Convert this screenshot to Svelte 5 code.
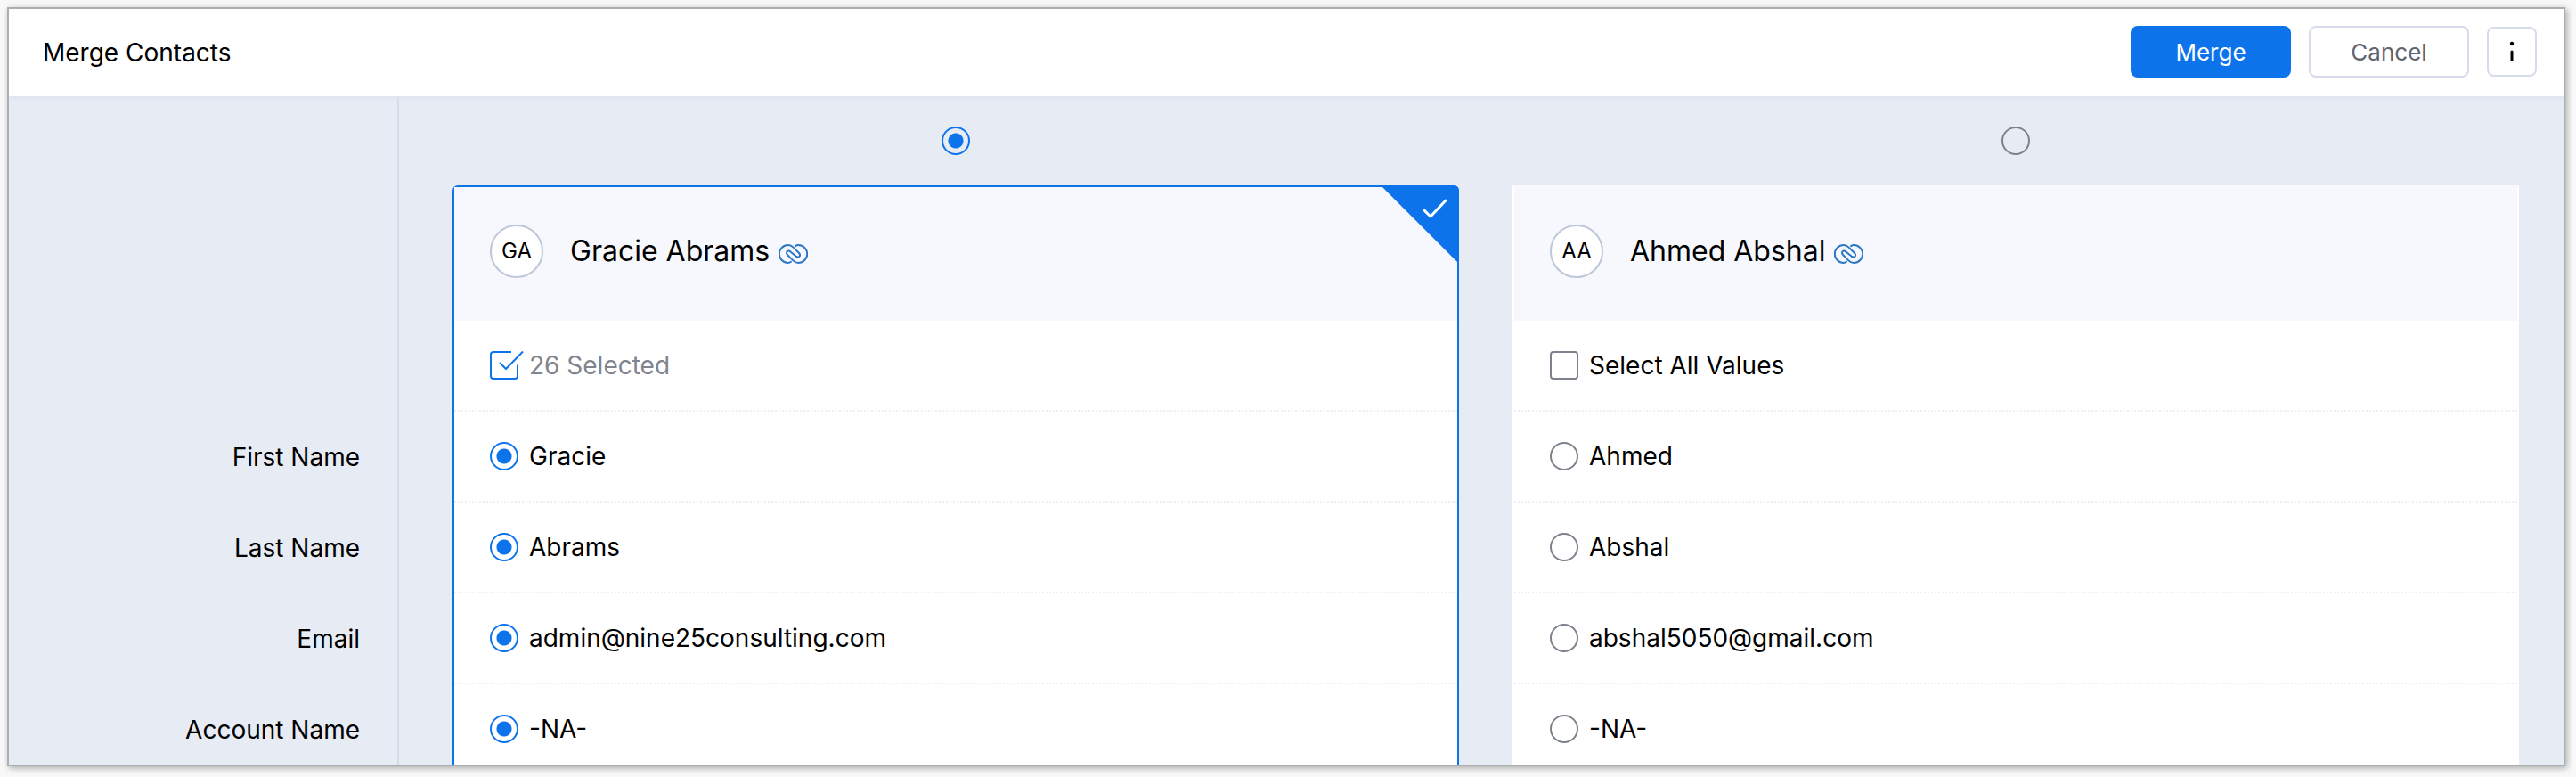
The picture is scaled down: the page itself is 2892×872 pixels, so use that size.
<script lang="ts">
    interface Contact {
        id: string;
        initials: string;
        name: string;
        values: string[];
    }

    const fields: string[] = [
        "First Name",
        "Last Name",
        "Email",
        "Account Name",
    ];

    const contacts: Contact[] = [
        {
            id: "gracie",
            initials: "GA",
            name: "Gracie Abrams",
            values: ["Gracie", "Abrams", "admin@nine25consulting.com", "-NA-"],
        },
        {
            id: "ahmed",
            initials: "AA",
            name: "Ahmed Abshal",
            values: ["Ahmed", "Abshal", "abshal5050@gmail.com", "-NA-"],
        },
    ];

    const totalFields = 26;

    let master: string = "gracie";
    let picked: string[] = fields.map(() => "gracie");

    $: allFrom = (id: string) => picked.every((p) => p === id);

    function selectAll(id: string) {
        picked = fields.map(() => id);
    }
</script>

<div class="dialog">
    <header class="topbar">
        <h1>Merge Contacts</h1>
        <div class="actions">
            <button type="button" class="primary">Merge</button>
            <button type="button">Cancel</button>
            <button type="button" class="info" aria-label="Information">
                <svg viewBox="0 0 8 24" width="8" height="24">
                    <circle cx="4" cy="3" r="2.2" />
                    <path d="M4 12V21.5" />
                </svg>
            </button>
        </div>
    </header>

    <div class="content">
        <div class="labels">
            {#each fields as field}
                <div class="field-label">{field}</div>
            {/each}
        </div>

        <div class="records">
            {#each contacts as contact}
                <div class="record">
                    <div class="master">
                        <input
                            type="radio"
                            name="master"
                            value={contact.id}
                            aria-label={contact.name}
                            bind:group={master}
                        />
                    </div>

                    <section class="card" class:active={master === contact.id}>
                        <div class="card-head">
                            <span class="avatar">{contact.initials}</span>
                            <h2>{contact.name}</h2>
                            <a href="#{contact.id}" aria-label="Open contact">
                                <svg viewBox="0 0 33 22" width="33" height="22">
                                    <path
                                        d="M14 19.8C13 20.6 12 21 10.8 21A10 10 0 0 1 10.8 1C13 1 15 2 16.6 3.6L23 10C25.6 13 22.6 16 19.6 13.6L13.4 8.4C10.4 6 7.6 9 10 12L16.4 18.4C18 20 20 21 22.2 21A10 10 0 0 0 22.2 1C21 1 20 1.4 19 2.2"
                                    />
                                </svg>
                            </a>
                            {#if master === contact.id}
                                <svg class="corner" viewBox="0 0 88 88">
                                    <path class="fill" d="M0 0H88V88Z" />
                                    <path
                                        class="tick"
                                        d="M49 28L56 35L73 17"
                                    />
                                </svg>
                            {/if}
                        </div>

                        <label class="row">
                            <span class="box">
                                <input
                                    type="checkbox"
                                    checked={allFrom(contact.id)}
                                    on:change={() => selectAll(contact.id)}
                                />
                                {#if allFrom(contact.id)}
                                    <svg viewBox="0 0 38 32">
                                        <path
                                            d="M24 1H4Q1 1 1 4V28Q1 31 4 31H28Q31 31 31 28V15.5M11 13L18 20L37 0.5"
                                        />
                                    </svg>
                                {/if}
                            </span>
                            {#if allFrom(contact.id)}
                                <span class="muted">{totalFields} Selected</span>
                            {:else}
                                <span>Select All Values</span>
                            {/if}
                        </label>

                        {#each contact.values as value, i}
                            <label class="row">
                                <input
                                    type="radio"
                                    name="field-{i}"
                                    value={contact.id}
                                    bind:group={picked[i]}
                                />
                                <span>{value}</span>
                            </label>
                        {/each}
                    </section>
                </div>
            {/each}
        </div>
    </div>
</div>

<style>
    :global(body) {
        background: #f8f8f8;
    }

    .dialog {
        display: flex;
        flex-direction: column;
        box-sizing: border-box;
        height: calc(100vh - 20px);
        margin: 8px 12px 12px 8px;
        border: 2px solid #a9afb2;
        box-shadow: 2px 2px 7px rgba(0, 0, 0, 0.32);
        background: #e6ebf4;
        color: #000;
        font-family: Inter, "Liberation Sans", sans-serif;
        font-size: 28px;
        line-height: 36px;
        overflow: hidden;
    }

    h1,
    h2 {
        margin: 0;
        font-weight: 400;
    }

    .topbar {
        display: flex;
        flex-shrink: 0;
        align-items: center;
        justify-content: space-between;
        height: 98px;
        padding: 0 30px 0 38px;
        background: #fff;
        box-shadow: 0 2px 4px #dde3eb;
        z-index: 1;
    }

    .topbar h1 {
        font-size: 28px;
    }

    .actions {
        display: flex;
        align-items: center;
        gap: 20px;
        padding-bottom: 2px;
    }

    button {
        box-sizing: border-box;
        width: 180px;
        height: 58px;
        padding: 0;
        border: 2px solid #d5dbe8;
        border-radius: 8px;
        background: #fff;
        color: #616570;
        font-family: inherit;
        font-size: 26px;
        cursor: pointer;
    }

    button.primary {
        border-color: #0c73eb;
        background: #0c73eb;
        color: #fff;
    }

    button.info {
        display: flex;
        align-items: center;
        justify-content: center;
        width: 56px;
        height: 56px;
    }

    .info path {
        stroke: #000;
        stroke-width: 3;
        stroke-linecap: round;
    }

    .content {
        display: flex;
        flex: 1;
        min-height: 0;
        overflow: hidden;
    }

    .labels {
        box-sizing: border-box;
        flex: 0 0 438px;
        padding: 354px 42px 0 0;
        border-right: 2px solid #d5dbe7;
        text-align: right;
    }

    .field-label {
        height: 102px;
        line-height: 102px;
    }

    .records {
        display: flex;
        flex: 1;
        gap: 60px;
        padding: 0 50px 0 60px;
    }

    .record {
        flex: 1;
        min-width: 0;
    }

    .master {
        display: flex;
        justify-content: center;
        padding: 34px 0;
    }

    input {
        appearance: none;
        flex-shrink: 0;
        box-sizing: border-box;
        width: 32px;
        height: 32px;
        margin: 0;
        border: 2px solid #7c818b;
    }

    input[type="radio"] {
        border-radius: 50%;
    }

    input[type="radio"]:checked {
        border-color: #0c73eb;
        background: radial-gradient(circle, #0c73eb 8px, transparent 9px);
    }

    input[type="checkbox"] {
        display: block;
        border-radius: 4px;
    }

    input[type="checkbox"]:checked {
        border-color: transparent;
    }

    .card {
        border: 2px solid #fff;
        border-top-color: #f6f8fd;
        border-bottom: 0;
        background: #fff;
    }

    .card.active {
        border-color: #0c73eb;
        border-radius: 6px 6px 0 0;
    }

    .card-head {
        position: relative;
        display: flex;
        align-items: center;
        box-sizing: border-box;
        height: 150px;
        padding: 0 40px 6px;
        background: #f6f8fd;
    }

    .avatar {
        box-sizing: border-box;
        width: 60px;
        height: 60px;
        margin-right: 30px;
        border: 2px solid #bdc7da;
        border-radius: 50%;
        background: #fff;
        font-size: 24px;
        line-height: 56px;
        text-align: center;
    }

    .card-head h2 {
        margin-right: 10px;
        font-size: 32px;
    }

    .card-head a {
        display: flex;
        padding-top: 6px;
    }

    .card-head a path {
        fill: none;
        stroke: #2c77c4;
        stroke-width: 2;
        stroke-linecap: round;
    }

    .corner {
        position: absolute;
        top: -2px;
        right: -2px;
        width: 88px;
        height: 88px;
        border-top-right-radius: 6px;
    }

    .corner .fill {
        fill: #0c73eb;
    }

    .corner .tick {
        fill: none;
        stroke: #fff;
        stroke-width: 3;
        stroke-linecap: round;
        stroke-linejoin: round;
    }

    .row {
        display: flex;
        align-items: center;
        gap: 12px;
        height: 100px;
        padding: 0 40px;
        border-bottom: 2px dotted #eeeff5;
    }

    .box {
        position: relative;
    }

    .box svg {
        position: absolute;
        top: 0;
        left: 0;
        width: 38px;
        height: 32px;
        pointer-events: none;
    }

    .box path {
        fill: none;
        stroke: #0c73eb;
        stroke-width: 2;
    }

    .muted {
        color: #7f848f;
    }
</style>
